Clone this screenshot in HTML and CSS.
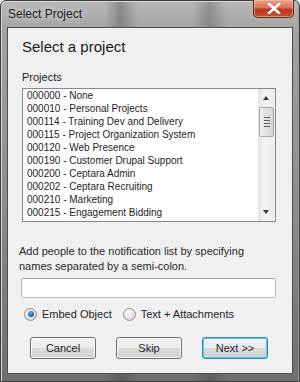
FILE: index.html
```html
<!DOCTYPE html>
<html lang="en">
<head>
    <meta charset="UTF-8">
    <meta name="viewport" content="width=device-width, initial-scale=1.0">
    <title>Select Project</title>
    <link rel="stylesheet" href="styles.css">
</head>
<body>

    <div class="window">
        <div class="titlebar">
            <span class="title">Select Project</span>
            <button class="close" aria-label="Close">
                <svg width="14" height="11" viewBox="0 0 14 11">
                    <path d="M2 1 L12 10 M12 1 L2 10" stroke="#fff" stroke-width="2.6" stroke-linecap="square"/>
                </svg>
            </button>
        </div>

        <div class="client">
            <h1>Select a project</h1>

            <label class="list-label">Projects</label>
            <div class="listbox">
                <ul class="items">
                    <li>000000 - None</li>
                    <li>000010 - Personal Projects</li>
                    <li>000114 - Training Dev and Delivery</li>
                    <li>000115 - Project Organization System</li>
                    <li>000120 - Web Presence</li>
                    <li>000190 - Customer Drupal Support</li>
                    <li>000200 - Ceptara Admin</li>
                    <li>000202 - Ceptara Recruiting</li>
                    <li>000210 - Marketing</li>
                    <li>000215 - Engagement Bidding</li>
                </ul>
                <!-- vertical scrollbar -->
                <div class="scrollbar">
                    <div class="arrow up"></div>
                    <div class="thumb">
                        <span></span><span></span><span></span><span></span>
                    </div>
                    <div class="track"></div>
                    <div class="arrow down"></div>
                </div>
            </div>

            <p class="hint">Add people to the notification list by specifying names separated by a semi-colon.</p>
            <input type="text" class="names">

            <div class="options">
                <label class="radio"><span class="dot checked"></span>Embed Object</label>
                <label class="radio"><span class="dot"></span>Text + Attachments</label>
            </div>

            <div class="buttons">
                <button class="btn">Cancel</button>
                <button class="btn">Skip</button>
                <button class="btn default">Next &gt;&gt;</button>
            </div>
        </div>
    </div>

</body>
</html>
```

FILE: styles.css
```css
body {
    margin: 0;
    padding: 0;
    width: 300px;
    height: 382px;
    overflow: hidden;
    font-family: "Liberation Sans", Arial, sans-serif;
    font-size: 11px;
    color: #1e1e1e;
}

.window {
    box-sizing: border-box;
    width: 300px;
    height: 382px;
    display: flex;
    flex-direction: column;
    padding: 0 6px 7px 6px;
    border: 1px solid #3c3c3c;
    border-radius: 6px 6px 0 0;
    background:
        linear-gradient(90deg, rgba(0,0,0,0) 0, rgba(0,0,0,0) 35%, rgba(60,60,60,0.35) 40%, rgba(0,0,0,0) 46%, rgba(0,0,0,0) 64%, rgba(60,60,60,0.3) 70%, rgba(0,0,0,0) 76%),
        linear-gradient(180deg, #b8b8b8 0, #a2a2a2 30px, #8c8c8c 200px, #6e6e6e 382px);
    box-shadow: inset 1px 1px 0 #d8d8d8, inset -1px 0 0 #9a9a9a;
}

.titlebar {
    height: 26px;
    display: flex;
    align-items: flex-start;
    justify-content: space-between;
}

.title {
    margin-top: 6px;
    margin-left: 1px;
    font-size: 12px;
    color: #1a1a1a;
    text-shadow: 0 0 6px rgba(255, 255, 255, 0.9);
}

.close {
    width: 41px;
    height: 18px;
    margin-top: -1px;
    margin-right: -1px;
    padding: 0;
    border: 1px solid #5a2a22;
    border-top: none;
    border-radius: 0 0 5px 5px;
    background: linear-gradient(180deg, #e8a08e 0, #d77257 45%, #b8341c 55%, #c8512f 100%);
    box-shadow: inset 0 0 0 1px rgba(255, 200, 180, 0.5);
    display: flex;
    align-items: center;
    justify-content: center;
}

.client {
    flex: 1;
    display: flex;
    flex-direction: column;
    background-color: #f0f0f0;
    border: 1px solid #4e4e4e;
    padding: 9px 0 0 13px;
}

h1 {
    margin: 0;
    font-size: 15px;
    font-weight: normal;
    line-height: 20px;
    margin-left: 1px;
    color: #1a1a1a;
}

.list-label {
    margin-top: 13px;
    margin-left: 1px;
    line-height: 15px;
}

.listbox {
    margin-top: 3px;
    margin-left: 1px;
    width: 254px;
    height: 134px;
    box-sizing: border-box;
    border: 1px solid #7f8a96;
    background-color: #fff;
    display: flex;
}

.items {
    flex: 1;
    margin: 0;
    padding: 0 0 0 4px;
    list-style: none;
    font-size: 10px;
}

.items li {
    line-height: 13px;
    white-space: nowrap;
}

.scrollbar {
    width: 17px;
    display: flex;
    flex-direction: column;
    background: linear-gradient(90deg, #e4e4e4, #f4f4f4 40%, #ececec);
}

.arrow {
    height: 17px;
    position: relative;
}

.arrow::after {
    content: "";
    position: absolute;
    left: 5px;
    border-left: 3.5px solid transparent;
    border-right: 3.5px solid transparent;
}

.arrow.up::after {
    top: 7px;
    border-bottom: 4px solid #3a3a3a;
}

.arrow.down::after {
    top: 6px;
    border-top: 4px solid #3a3a3a;
}

.thumb {
    height: 30px;
    margin: 1px 1px 0 1px;
    box-sizing: border-box;
    border: 1px solid #a8a8a8;
    border-radius: 2px;
    background: linear-gradient(90deg, #f0f0f0, #e2e2e2 50%, #d4d4d4);
    display: flex;
    flex-direction: column;
    align-items: center;
    justify-content: center;
    gap: 2px;
}

.thumb span {
    width: 6px;
    height: 1px;
    background-color: #5d5d5d;
}

.track {
    flex: 1;
}

.hint {
    margin: 22px 0 0 0;
    margin-left: -2px;
    width: 250px;
    line-height: 15px;
    color: #2a2a2a;
}

.names {
    margin: 4px 0 0 0;
    width: 255px;
    height: 20px;
    box-sizing: border-box;
    border: 1px solid #b6bcc6;
    border-top-color: #a0a6ae;
    border-radius: 2px;
    background-color: #fff;
}

.options {
    margin-top: 8px;
    margin-left: 3px;
    height: 16px;
    display: flex;
    align-items: center;
    gap: 11px;
}

.radio {
    display: flex;
    align-items: center;
    gap: 5px;
}

.dot {
    width: 11px;
    height: 11px;
    border-radius: 50%;
    border: 1px solid #8e8f8f;
    background: radial-gradient(circle at 40% 35%, #ffffff, #e0e0e0 60%, #c8c8c8);
    display: flex;
    align-items: center;
    justify-content: center;
}

.dot.checked::after {
    content: "";
    width: 6px;
    height: 6px;
    border-radius: 50%;
    background: radial-gradient(circle at 40% 35%, #6cb4e8, #1d5b8c 70%);
}

.buttons {
    margin-top: 15px;
    margin-left: 9px;
    display: flex;
    gap: 20px;
}

.btn {
    width: 66px;
    height: 22px;
    padding: 0;
    font-family: "Liberation Sans", Arial, sans-serif;
    font-size: 11px;
    color: #1e1e1e;
    border: 1px solid #707070;
    border-radius: 3px;
    background: linear-gradient(180deg, #f2f2f2 0, #ebebeb 50%, #dddddd 51%, #cfcfcf 100%);
    box-shadow: inset 0 0 0 1px #fbfbfb;
}

.btn.default {
    border-color: #3c7fb1;
    box-shadow: inset 0 0 0 1px #48d0f6;
}
```
